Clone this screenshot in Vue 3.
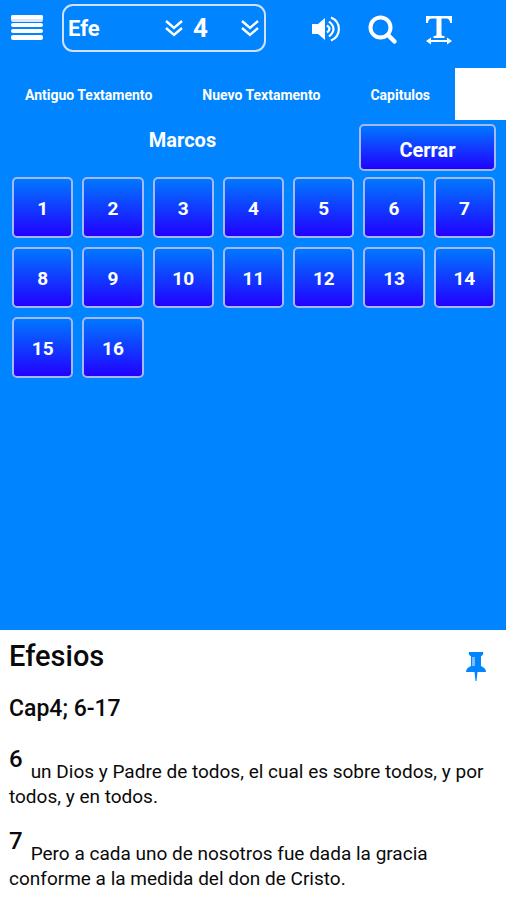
<script setup>
import { ref } from 'vue'

const book = ref('Efe')
const chapter = ref('4')
const tabs = ['Antiguo Textamento', 'Nuevo Textamento', 'Capitulos']
const chapters = Array.from({ length: 16 }, (_, i) => i + 1)
const verses = [
  { number: 6, text: 'un Dios y Padre de todos, el cual es sobre todos, y por todos, y en todos.' },
  { number: 7, text: 'Pero a cada uno de nosotros fue dada la gracia conforme a la medida del don de Cristo.' },
]
</script>

<template>
  <div class="app">
    <section class="panel">
      <header class="bar">
        <button class="icon menu" type="button" aria-label="Menu">
          <svg width="32" height="26" viewBox="0 0 32 26" fill="#fff">
            <rect y="0" width="32" height="7" rx="2" fill="#d8e6ff" />
            <rect y="0" width="32" height="4" rx="2" />
            <rect y="8" width="32" height="4" rx="2" />
            <rect y="14" width="32" height="4" rx="2" />
            <rect y="20" width="32" height="5" rx="2" />
          </svg>
        </button>

        <div class="picker">
          <label class="field book">
            <select v-model="book" aria-label="Libro"><option>Efe</option></select>
            <svg class="chevron" width="18" height="18" viewBox="0 0 18 18" fill="none" stroke="#fff" stroke-width="2.4">
              <path d="M1 2l8 7 8-7M1 9l8 7 8-7" />
            </svg>
          </label>
          <label class="field chapter">
            <select v-model="chapter" aria-label="Capitulo"><option>4</option></select>
            <svg class="chevron" width="18" height="18" viewBox="0 0 18 18" fill="none" stroke="#fff" stroke-width="2.4">
              <path d="M1 2l8 7 8-7M1 9l8 7 8-7" />
            </svg>
          </label>
        </div>

        <nav class="tools">
          <button class="icon" type="button" aria-label="Escuchar">
            <svg width="30" height="26" viewBox="0 0 30 26" fill="none" stroke="#fff" stroke-width="2.2">
              <path d="M1 9h6l7-6v22l-7-6H1z" fill="#fff" stroke="none" />
              <path d="M16 10.500q5 3.500 0 7M18 6.500q9 7.500 0 15M20 2.500c10.500 4.500 10.500 18.500 0 23" />
            </svg>
          </button>
          <button class="icon" type="button" aria-label="Buscar">
            <svg width="30" height="30" viewBox="0 0 30 30" fill="none" stroke="#fff">
              <circle cx="12.500" cy="14.500" r="10" stroke-width="4" />
              <path d="M20 22l6.500 6.500" stroke-width="4.500" stroke-linecap="round" />
            </svg>
          </button>
          <button class="icon" type="button" aria-label="Texto">
            <svg width="28" height="30" viewBox="0 0 28 30" fill="#fff">
              <path d="M1 3h26v7h-2q0-4.500-4-4.500h-4.500v16q0 1.500 3 1.500v2H8.500v-2q3 0 3-1.500v-16H7q-4 0-4 4.500H1z" />
              <path d="M1 28l5-3.500V27h16v-2.500l5 3.500-5 3.500V29H6v2.500z" />
            </svg>
          </button>
        </nav>
      </header>

      <nav class="tabs">
        <button v-for="tab in tabs" :key="tab" class="tab" type="button">{{ tab }}</button>
        <span class="filler"></span>
      </nav>

      <div class="heading">
        <h2 class="title">Marcos</h2>
        <button class="key close" type="button">Cerrar</button>
      </div>

      <div class="grid">
        <button v-for="n in chapters" :key="n" class="key" type="button">{{ n }}</button>
      </div>
    </section>

    <main class="reading">
      <div class="top">
        <h1 class="name">Efesios</h1>
        <button class="icon pin" type="button" aria-label="Fijar">
          <svg width="20" height="30" viewBox="0 0 20 30" fill="#0084ff">
            <path d="M3 0h14q1 3-2 4v10q5 2 5 6H0q0-4 5-6V4Q2 3 3 0z" />
            <path d="M8.500 20h3l-1 9h-1z" />
            <path d="M6 5h3v9H6z" fill="#7dbdff" />
          </svg>
        </button>
      </div>
      <h2 class="range">Cap4; 6-17</h2>
      <p v-for="verse in verses" :key="verse.number" class="verse">
        <sup class="number">{{ verse.number }}</sup>{{ verse.text }}
      </p>
    </main>
  </div>
</template>

<style>
body {
  margin: 0;
  background: #fff;
}
</style>

<style scoped>
.app {
  font-family: Roboto, "Liberation Sans", sans-serif;
  color: #0a0a0a;
}

button,
select {
  font-family: inherit;
  font-weight: 700;
  color: #fff;
  padding: 0;
  border: 0;
  background: none;
}

h1,
h2,
p {
  margin: 0;
}

.panel {
  box-sizing: border-box;
  min-height: 70vh;
  color: #fff;
  background: #0084ff;
}

.bar {
  display: flex;
  align-items: center;
  height: 56px;
  padding: 0 53px 0 11px;
}

.icon {
  display: flex;
}

.icon svg {
  overflow: visible;
}

.picker {
  box-sizing: border-box;
  display: flex;
  align-items: center;
  gap: 10px;
  width: 204px;
  height: 48px;
  margin-left: 19px;
  padding: 0 5px 0 4px;
  border: 2px solid #d0e0ff;
  border-radius: 11px;
}

.field {
  display: flex;
  align-items: center;
}

.field select {
  flex: 1;
  min-width: 0;
  appearance: none;
  outline: none;
}

.book {
  width: 115px;
}

.book select {
  font-size: 22px;
}

.chapter {
  flex: 1;
}

.chapter select {
  font-size: 26px;
}

.chevron {
  flex: none;
  pointer-events: none;
}

.tools {
  flex: 1;
  display: flex;
  align-items: center;
  justify-content: space-between;
  margin-left: 45px;
}

.tabs {
  display: flex;
  height: 52px;
  margin-top: 12px;
}

.tab {
  padding: 2px 25px 0;
  font-size: 14px;
  white-space: nowrap;
}

.filler {
  flex: 1;
  background: #fff;
}

.heading {
  display: grid;
  grid-template-columns: 1fr 137px;
  align-items: start;
  padding: 4px 10px 0 6px;
}

.title {
  padding-top: 4px;
  font-size: 20px;
  line-height: 24px;
  text-align: center;
}

.key {
  box-sizing: border-box;
  height: 61px;
  padding-top: 2px;
  border: 2px solid #a5b8fa;
  border-radius: 5px;
  font-size: 19px;
  background: linear-gradient(#0078ff, #2200ff);
}

.close {
  height: 47px;
  padding-top: 4px;
  font-size: 20px;
}

.grid {
  display: grid;
  grid-template-columns: repeat(7, 1fr);
  gap: 9px;
  padding: 6px 11px 9px 12px;
}

.reading {
  padding: 8px 9px;
}

.top {
  display: flex;
  align-items: flex-start;
  justify-content: space-between;
  height: 36px;
  padding-right: 11px;
}

.pin {
  padding-top: 14px;
}

.name {
  font-size: 29px;
  font-weight: 500;
  line-height: 36px;
}

.range {
  margin: 22px 0 25px;
  font-size: 23px;
  font-weight: 500;
  line-height: 26px;
}

.verse {
  margin-bottom: 20px;
  font-size: 19px;
  line-height: 25px;
}

.number {
  margin-right: 8px;
  font-size: 24px;
  font-weight: 500;
  line-height: 24px;
  vertical-align: 11px;
}
</style>
